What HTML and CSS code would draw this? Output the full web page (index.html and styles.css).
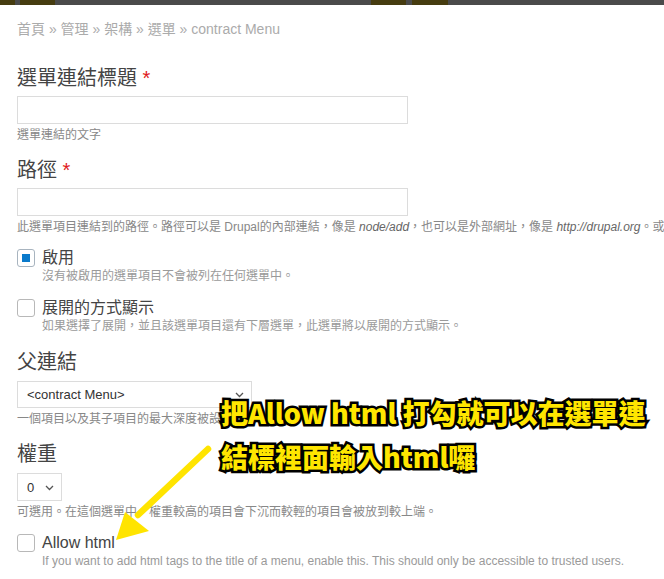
FILE: index.html
```html
<!DOCTYPE html>
<html>
  <head>
    <meta charset="utf-8">
    <link rel="stylesheet" href="styles.css">
  </head>
  <body>
    <div class="topbar"></div>
    <div class="page">
      <div class="breadcrumb">首頁 » 管理 » 架構 » 選單 » contract Menu</div>

      <div class="form-item">
        <label class="title">選單連結標題 <span class="req">*</span></label>
        <div class="text-input wide"></div>
        <div class="desc">選單連結的文字</div>
      </div>

      <div class="form-item">
        <label class="title">路徑 <span class="req">*</span></label>
        <div class="text-input wide"></div>
        <div class="desc clip">此選單項目連結到的路徑。路徑可以是 Drupal的內部連結，像是 <em>node/add</em>，也可以是外部網址，像是 <em>http://drupal.org</em>。或</div>
      </div>

      <div class="form-item check-item">
        <div class="check-row">
          <span class="checkbox checked"></span>
          <span class="check-label">啟用</span>
        </div>
        <div class="desc indent">沒有被啟用的選單項目不會被列在任何選單中。</div>
      </div>

      <div class="form-item check-item">
        <div class="check-row">
          <span class="checkbox"></span>
          <span class="check-label">展開的方式顯示</span>
        </div>
        <div class="desc indent">如果選擇了展開，並且該選單項目還有下層選單，此選單將以展開的方式顯示。</div>
      </div>

      <div class="form-item">
        <label class="title">父連結</label>
        <div class="select parent">
          <span>&lt;contract Menu&gt;</span>
          <svg class="chev" width="9" height="6" viewBox="0 0 9 6"><path d="M1 1l3.5 3.5L8 1" fill="none" stroke="#555" stroke-width="1.3"/></svg>
        </div>
        <div class="desc">一個項目以及其子項目的最大深度被設定為 9。</div>
      </div>

      <div class="form-item">
        <label class="title">權重</label>
        <div class="select weight">
          <span>0</span>
          <svg class="chev" width="9" height="6" viewBox="0 0 9 6"><path d="M1 1l3.5 3.5L8 1" fill="none" stroke="#555" stroke-width="1.3"/></svg>
        </div>
        <div class="desc">可選用。在這個選單中，權重較高的項目會下沉而較輕的項目會被放到較上端。</div>
      </div>

      <div class="form-item check-item">
        <div class="check-row">
          <span class="checkbox"></span>
          <span class="check-label">Allow html</span>
        </div>
        <div class="desc indent">If you want to add html tags to the title of a menu, enable this. This should only be accessible to trusted users.</div>
      </div>
    </div>

    <!-- 註解 -->
    <div class="note">把Allow html 打勾就可以在選單連<br>結標裡面輸入html囉</div>
    <svg class="arrow" width="120" height="110" viewBox="0 0 120 110">
      <line x1="108" y1="8" x2="38" y2="74" stroke="#ffe400" stroke-width="6.5" stroke-linecap="round"/>
      <polygon points="16,99 25,71 49,90" fill="#ffe400"/>
    </svg>
  </body>
</html>
```

FILE: styles.css
```css
html, body {
  margin: 0;
  background: #fff;
  overflow: hidden;
}
body {
  font-family: "Liberation Sans", "Noto Sans CJK TC", sans-serif;
  color: #444;
  position: relative;
  width: 664px;
  height: 579px;
}
.topbar {
  height: 5px;
  background: linear-gradient(to right,
    #463c10 0, #463c10 15px, #4a4a4a 15px, #4a4a4a 20px,
    #463c10 20px, #463c10 55px, #4a4a4a 55px, #4a4a4a 371px,
    #463c10 371px, #463c10 406px, #4a4a4a 406px, #4a4a4a 412px,
    #463c10 412px, #463c10 448px, #4a4a4a 448px);
}
.page {
  padding: 0 17px;
}
.breadcrumb {
  margin-top: 14px;
  font-size: 14px;
  line-height: 20px;
  color: #ababab;
  margin-bottom: 25px;
}
.form-item {
  margin-bottom: 13px;
}
.title {
  display: block;
  font-size: 20px;
  line-height: 28px;
  color: #444;
  margin-bottom: 4px;
}
.req {
  color: #e0191b;
}
.text-input {
  box-sizing: border-box;
  height: 28px;
  border: 1px solid #dcdcdc;
  background: #fff;
}
.wide {
  width: 391px;
}
.desc {
  font-size: 12px;
  line-height: 16px;
  color: #888;
  margin-top: 3px;
  white-space: nowrap;
}
.clip {
  width: 647px;
  overflow: hidden;
}
.desc em {
  font-style: italic;
  color: #666;
}
.indent {
  margin-left: 25px;
  margin-top: 0;
  color: #9a9a9a;
}
.check-row {
  display: flex;
  align-items: center;
  height: 20px;
  gap: 7px;
}
.check-item {
  margin-bottom: 14px;
}
.checkbox {
  box-sizing: border-box;
  width: 18px;
  height: 18px;
  border: 1px solid #b8b8b8;
  border-radius: 3px;
  background: #fff;
  display: flex;
  align-items: center;
  justify-content: center;
}
.checkbox.checked {
  border-color: #a8b4bf;
}
.checkbox.checked::after {
  content: "";
  width: 8px;
  height: 8px;
  background: #0a7acb;
}
.check-label {
  font-size: 16px;
  line-height: 20px;
  color: #444;
}
.select {
  box-sizing: border-box;
  height: 27px;
  border: 1px solid #dcdcdc;
  display: flex;
  align-items: center;
  justify-content: space-between;
  padding: 0 7px 0 9px;
  font-size: 13px;
  color: #333;
  margin-top: 5px;
}
.parent {
  width: 235px;
}
.weight {
  width: 45px;
  height: 28px;
}
.chev {
  margin-top: 1px;
}
.note {
  position: absolute;
  left: 221px;
  top: 391px;
  font-family: "Noto Sans CJK TC", sans-serif;
  font-weight: 900;
  font-size: 27px;
  line-height: 44px;
  color: #ffe600;
  -webkit-text-stroke: 5px #000;
  paint-order: stroke fill;
  white-space: nowrap;
}
.arrow {
  position: absolute;
  left: 100px;
  top: 441px;
}
```
